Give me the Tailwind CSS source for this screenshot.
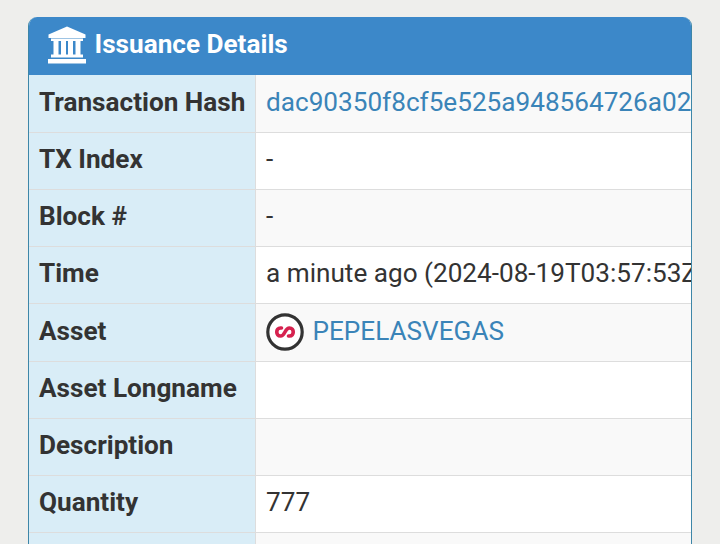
<!DOCTYPE html>
<html lang="en">
<head>
    <meta charset="UTF-8">
    <title>Issuance Details</title>
    <script src="https://cdn.jsdelivr.net/npm/@tailwindcss/browser@4"></script>
</head>
<body class="bg-[#eeeeec] font-['Roboto',sans-serif] text-[26.15px] text-[#333333] h-[544px] overflow-hidden">
    <div class="pt-[17px] pl-[28px] pr-[28px]">
        <div class="rounded-t-[9px] overflow-hidden h-[527px] border-x border-[#3d86a8] bg-white">
            <!-- header -->
            <div class="h-[58px] bg-[#3c88c9] flex items-center pl-[18px] gap-[7.5px] text-white font-bold">
                <svg class="w-[40px] h-[38px] -mt-[2px]" viewBox="0 0 40 38" fill="#ffffff">
                    <path d="M20 0.5 L38.5 8.5 V12 H1.5 V8.5 Z"/>
                    <rect x="4" y="12.5" width="32" height="2.5"/>
                    <rect x="6.5" y="15" width="5" height="14"/>
                    <rect x="14" y="15" width="5" height="14"/>
                    <rect x="21" y="15" width="5" height="14"/>
                    <rect x="28.5" y="15" width="5" height="14"/>
                    <rect x="4" y="28.5" width="32" height="3"/>
                    <rect x="1" y="33" width="38" height="4.5"/>
                </svg>
                <span class="-mt-[2px]">Issuance Details</span>
            </div>
            <!-- rows -->
            <div class="flex h-[58px] bg-[#f9f9f9] border-b border-[#dddddd]">
                <div class="w-[227px] shrink-0 bg-[#d9edf7] border-r border-[#dddddd] pl-[10px] pb-[1px] flex items-center font-bold whitespace-nowrap">Transaction Hash</div>
                <div class="pl-[10px] pb-[1px] flex items-center whitespace-nowrap overflow-hidden text-[#3a84b8]">dac90350f8cf5e525a948564726a02</div>
            </div>
            <div class="flex h-[57px] bg-white border-b border-[#dddddd]">
                <div class="w-[227px] shrink-0 bg-[#d9edf7] border-r border-[#dddddd] pl-[10px] pb-[3px] flex items-center font-bold">TX Index</div>
                <div class="pl-[10px] pb-[3px] flex items-center">-</div>
            </div>
            <div class="flex h-[57px] bg-[#f9f9f9] border-b border-[#dddddd]">
                <div class="w-[227px] shrink-0 bg-[#d9edf7] border-r border-[#dddddd] pl-[10px] pb-[3px] flex items-center font-bold">Block #</div>
                <div class="pl-[10px] pb-[3px] flex items-center">-</div>
            </div>
            <div class="flex h-[57px] bg-white border-b border-[#dddddd]">
                <div class="w-[227px] shrink-0 bg-[#d9edf7] border-r border-[#dddddd] pl-[10px] pb-[3px] flex items-center font-bold">Time</div>
                <div class="pl-[10px] pb-[3px] flex items-center whitespace-nowrap overflow-hidden">a minute ago (2024-08-19T03:57:53Z)</div>
            </div>
            <div class="flex h-[58px] bg-[#f9f9f9] border-b border-[#dddddd]">
                <div class="w-[227px] shrink-0 bg-[#d9edf7] border-r border-[#dddddd] pl-[10px] pb-[1px] flex items-center font-bold">Asset</div>
                <div class="pl-[9.5px] pb-[1px] flex items-center gap-[9px] text-[#3a84b8]">
                    <svg class="w-[38px] h-[38px]" viewBox="0 0 38 38" fill="none">
                        <circle cx="19" cy="19" r="17.2" fill="#ffffff" stroke="#333333" stroke-width="3.2"/>
                        <path d="M15.5 15 H14.5 C9.5 15 9.5 23 14.5 23 C17 23 18 21 19 19 C20 17 21 15 23.5 15 C28.5 15 28.5 23 23.5 23 H22.5" stroke="#d6224f" stroke-width="3.6" stroke-linecap="round"/>
                    </svg>
                    <span>PEPELASVEGAS</span>
                </div>
            </div>
            <div class="flex h-[57px] bg-white border-b border-[#dddddd]">
                <div class="w-[227px] shrink-0 bg-[#d9edf7] border-r border-[#dddddd] pl-[10px] pb-[3px] flex items-center font-bold">Asset Longname</div>
                <div class="pl-[10px] flex items-center"></div>
            </div>
            <div class="flex h-[57px] bg-[#f9f9f9] border-b border-[#dddddd]">
                <div class="w-[227px] shrink-0 bg-[#d9edf7] border-r border-[#dddddd] pl-[10px] pb-[3px] flex items-center font-bold">Description</div>
                <div class="pl-[10px] flex items-center"></div>
            </div>
            <div class="flex h-[57px] bg-white border-b border-[#dddddd]">
                <div class="w-[227px] shrink-0 bg-[#d9edf7] border-r border-[#dddddd] pl-[10px] pb-[3px] flex items-center font-bold">Quantity</div>
                <div class="pl-[10px] pb-[3px] flex items-center">777</div>
            </div>
            <div class="flex h-[12px] bg-[#f9f9f9]">
                <div class="w-[227px] shrink-0 bg-[#d9edf7] border-r border-[#dddddd]"></div>
                <div></div>
            </div>
        </div>
    </div>
</body>
</html>
